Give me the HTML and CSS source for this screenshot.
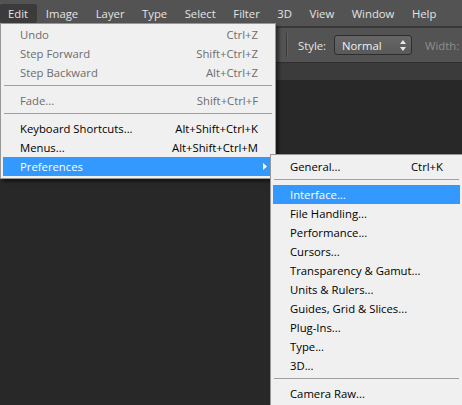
FILE: index.html
```html
<!DOCTYPE html>
<html>
<head>
<meta charset="utf-8">
<link rel="stylesheet" href="styles.css">
</head>
<body>
<div class="app">
  <div class="menubar">
    <span class="mb-item active">Edit</span>
    <span class="mb-item">Image</span>
    <span class="mb-item">Layer</span>
    <span class="mb-item">Type</span>
    <span class="mb-item">Select</span>
    <span class="mb-item">Filter</span>
    <span class="mb-item">3D</span>
    <span class="mb-item">View</span>
    <span class="mb-item">Window</span>
    <span class="mb-item">Help</span>
  </div>
  <div class="toolbar">
    <span class="tb-sep"></span>
    <span class="tb-label">Style:</span>
    <span class="tb-select">
      <span class="tb-select-text">Normal</span>
      <svg class="tb-select-arrows" width="6" height="11" viewBox="0 0 6 11"><polygon points="0,4 3,0 6,4" fill="#e8e8e8"/><polygon points="0,7 6,7 3,11" fill="#e8e8e8"/></svg>
    </span>
    <span class="tb-label tb-disabled">Width:</span>
    <span class="tb-input"></span>
  </div>
  <div class="tabstrip"></div>
  <div class="workspace"></div>

  <div class="menu edit-menu">
    <div class="mi disabled"><span class="mi-label">Undo</span><span class="mi-key">Ctrl+Z</span></div>
    <div class="mi disabled"><span class="mi-label">Step Forward</span><span class="mi-key">Shift+Ctrl+Z</span></div>
    <div class="mi disabled"><span class="mi-label">Step Backward</span><span class="mi-key">Alt+Ctrl+Z</span></div>
    <div class="msep"></div>
    <div class="mi disabled"><span class="mi-label">Fade...</span><span class="mi-key">Shift+Ctrl+F</span></div>
    <div class="msep"></div>
    <div class="mi"><span class="mi-label">Keyboard Shortcuts...</span><span class="mi-key">Alt+Shift+Ctrl+K</span></div>
    <div class="mi"><span class="mi-label">Menus...</span><span class="mi-key">Alt+Shift+Ctrl+M</span></div>
    <div class="mi hot has-sub"><span class="mi-label">Preferences</span>
      <svg class="mi-arrow" width="4" height="7" viewBox="0 0 4 7"><polygon points="0,0 4,3.5 0,7" fill="#ffffff"/></svg>
    </div>
  </div>

  <div class="menu sub-menu">
    <div class="mi"><span class="mi-label">General...</span><span class="mi-key">Ctrl+K</span></div>
    <div class="msep"></div>
    <div class="mi hot"><span class="mi-label">Interface...</span></div>
    <div class="mi"><span class="mi-label">File Handling...</span></div>
    <div class="mi"><span class="mi-label">Performance...</span></div>
    <div class="mi"><span class="mi-label">Cursors...</span></div>
    <div class="mi"><span class="mi-label">Transparency &amp; Gamut...</span></div>
    <div class="mi"><span class="mi-label">Units &amp; Rulers...</span></div>
    <div class="mi"><span class="mi-label">Guides, Grid &amp; Slices...</span></div>
    <div class="mi"><span class="mi-label">Plug-Ins...</span></div>
    <div class="mi"><span class="mi-label">Type...</span></div>
    <div class="mi"><span class="mi-label">3D...</span></div>
    <div class="msep"></div>
    <div class="mi"><span class="mi-label">Camera Raw...</span></div>
  </div>
</div>
</body>
</html>
```

FILE: styles.css
```css
html, body {
  margin: 0;
  padding: 0;
  width: 462px;
  height: 405px;
  overflow: hidden;
  background: #282828;
}

.app {
  position: relative;
  width: 462px;
  height: 405px;
  display: flex;
  flex-direction: column;
  font-family: "Open Sans", "Noto Sans", sans-serif;
  font-size: 11.3px;
}

.menubar {
  flex: none;
  height: 28px;
  background: #535353;
  display: flex;
  align-items: flex-start;
  padding-top: 4px;
  box-sizing: border-box;
  border-bottom: 2px solid #383838;
}

.mb-item {
  height: 19px;
  line-height: 19px;
  padding: 0 8.75px;
  color: #e4e4e4;
  white-space: nowrap;
}

.mb-item.active {
  background: #3b3b3b;
  border-radius: 2px;
  padding-left: 8px;
  padding-right: 9px;
}

.toolbar {
  flex: none;
  height: 35px;
  background: #535353;
  display: flex;
  align-items: center;
  padding-left: 286px;
  box-sizing: border-box;
  border-bottom: 1px solid #2f2f2f;
  overflow: hidden;
}

.toolbar > * {
  flex: none;
}

.tb-sep {
  width: 1px;
  height: 24px;
  background: #3a3a3a;
  border-right: 1px solid #606060;
}

.tb-label {
  color: #e6e6e6;
  margin-left: 10px;
}

.tb-disabled {
  color: #8e8e8e;
  margin-left: 13px;
}

.tb-select {
  margin-left: 8px;
  width: 78px;
  height: 20px;
  box-sizing: border-box;
  border: 1px solid #2e2e2e;
  border-radius: 3px;
  background: linear-gradient(#666666, #595959);
  display: flex;
  align-items: center;
  justify-content: space-between;
  padding: 0 5px 0 7px;
}

.tb-select-text {
  color: #f2f2f2;
}

.tb-select-arrows {
  display: block;
}

.tb-input {
  margin-left: 6px;
  width: 20px;
  height: 20px;
  box-sizing: border-box;
  border: 1px solid #2e2e2e;
  background: #5a5a5a;
}

.tabstrip {
  flex: none;
  height: 17px;
  background: #3b3b3b;
}

.workspace {
  flex: 1;
  background: #282828;
}

.menu {
  position: absolute;
  background: #f0f0f0;
  border: 1px solid #979797;
  box-sizing: border-box;
  box-shadow: 3px 3px 3px rgba(0, 0, 0, 0.45);
  padding: 1px 2px 2px;
}

.edit-menu {
  left: 0;
  top: 23px;
  width: 276px;
}

.sub-menu {
  left: 270px;
  top: 154px;
  width: 193px;
  padding-top: 2px;
}

.mi {
  position: relative;
  display: flex;
  justify-content: space-between;
  height: 19px;
  line-height: 19px;
  padding: 0 15px 0 17px;
  color: #000000;
  white-space: nowrap;
}

.sub-menu .mi {
  padding-right: 17px;
}

.mi.disabled {
  color: #6d6d6d;
}

.mi.hot {
  background: #3399ff;
  color: #ffffff;
}

.mi-arrow {
  position: absolute;
  right: 6px;
  top: 6px;
}

.msep {
  height: 1px;
  background: #a0a0a0;
  margin: 3px 1px 5px;
}
```
